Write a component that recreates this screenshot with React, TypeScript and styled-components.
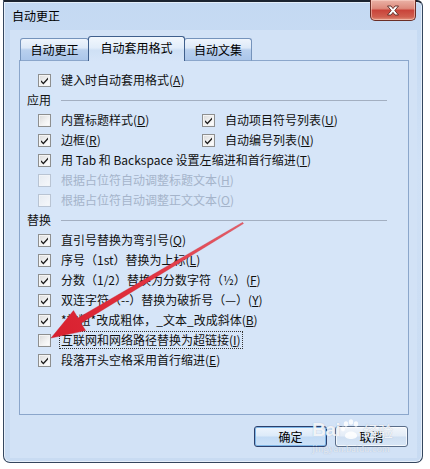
import React from 'react';
import styled, { createGlobalStyle } from 'styled-components';

const GlobalStyle = createGlobalStyle`
  html, body {
    margin: 0;
    padding: 0;
    background: #ffffff;
  }
  body {
    font-family: "Noto Sans CJK SC", "Noto Sans", sans-serif;
    font-size: 12px;
    color: #111;
  }
`;

const Page = styled.div`
  position: relative;
  width: 430px;
  height: 469px;
  overflow: hidden;
  background: #fff;
`;

const Window = styled.div`
  box-sizing: border-box;
  margin-left: 3px;
  width: 420px;
  height: 463px;
  border: 1px solid #34465e;
  border-top: 2px solid #1c2430;
  border-radius: 0 6px 7px 7px;
  background: linear-gradient(180deg, #c4d9f2 0%, #d0e1f6 35%, #c8dbf2 100%);
  box-shadow: inset 0 0 0 1px rgba(255, 255, 255, 0.55);
  display: flex;
  flex-direction: column;
`;

const TitleBar = styled.div`
  height: 28px;
  display: flex;
  justify-content: space-between;
  align-items: flex-start;
`;

const TitleText = styled.div`
  padding: 5px 0 0 8px;
  font-size: 12px;
  line-height: 18px;
  color: #000;
`;

const CloseButton = styled.div`
  box-sizing: border-box;
  width: 46px;
  height: 21px;
  margin: -2px 6px 0 0;
  border: 1px solid #6a2e26;
  border-top: none;
  border-radius: 0 0 5px 5px;
  background: linear-gradient(180deg, #eab2a6 0%, #dd8a7c 42%, #c9443a 52%, #d06050 85%, #e2957f 100%);
  box-shadow: inset 0 0 0 1px rgba(255, 220, 210, 0.5);
  display: flex;
  align-items: center;
  justify-content: center;
`;

const Client = styled.div`
  flex: 1;
  margin: 0 5px 4px 6px;
  border: 1px solid #617d a3;
  border-color: #627ea4;
  background: #d2e2f6;
  padding: 7px 8px 0 9px;
  display: flex;
  flex-direction: column;
`;

const TabStrip = styled.div`
  display: flex;
  align-items: flex-end;
  height: 24px;
  padding-left: 1px;
  margin-bottom: -1px;
`;

const Tab = styled.div<{ $active?: boolean; $width: number }>`
  box-sizing: border-box;
  position: relative;
  z-index: ${p => (p.$active ? 2 : 1)};
  width: ${p => p.$width}px;
  height: ${p => (p.$active ? 25 : 23)}px;
  margin-left: ${p => (p.$active ? -1 : 0)}px;
  margin-right: ${p => (p.$active ? -1 : 0)}px;
  border: 1px solid ${p => (p.$active ? '#3f5f8c' : '#7593bb')};
  border-bottom: ${p => (p.$active ? 'none' : '1px solid #8ba6cb')};
  border-radius: 3px 3px 0 0;
  background: ${p =>
    p.$active
      ? 'linear-gradient(180deg, #f2f7fd 0%, #e2edfa 45%, #cfe0f5 55%, #d6e5f8 100%)'
      : 'linear-gradient(180deg, #eef4fc 0%, #dde9f8 42%, #b9d0ee 52%, #abc6ea 100%)'};
  display: flex;
  justify-content: center;
  align-items: center;
  padding-bottom: ${p => (p.$active ? 3 : 0)}px;
  font-size: 12px;
  color: #000;
`;

const Panel = styled.div`
  box-sizing: border-box;
  height: 355px;
  border: 1px solid #8ba6cb;
  background: #d6e5f8;
  padding: 9px 21px 0 7px;
`;

const Row = styled.div`
  display: flex;
  align-items: center;
  height: 20px;
  padding-left: 11px;
`;

const TwoColRow = styled.div`
  display: grid;
  grid-template-columns: 164px auto;
  align-items: center;
  height: 20px;
  padding-left: 11px;
`;

const SectionHeader = styled.div`
  display: grid;
  grid-template-columns: 34px 1fr;
  align-items: center;
  height: 20px;
  line-height: 20px;
`;

const SectionLine = styled.div`
  height: 1px;
  background: #a3afc1;
  margin-top: 1px;
`;

const Option = styled.div`
  display: flex;
  align-items: center;
`;

const Box = styled.div<{ $disabled?: boolean }>`
  box-sizing: border-box;
  width: 13px;
  height: 13px;
  border: 1px solid ${p => (p.$disabled ? '#b9c4d3' : '#8e8f8f')};
  background: ${p =>
    p.$disabled
      ? 'linear-gradient(135deg, #e6ebf1 0%, #f6f8fb 100%)'
      : 'linear-gradient(135deg, #d9d9d9 0%, #f3f3f3 60%, #ffffff 100%)'};
  box-shadow: inset 0 0 0 1px ${p => (p.$disabled ? '#f1f4f8' : '#f4f4f4')};
  display: flex;
  align-items: center;
  justify-content: center;
  flex: none;
`;

const Label = styled.span<{ $disabled?: boolean; $focus?: boolean }>`
  margin-left: 10px;
  line-height: 16px;
  white-space: nowrap;
  color: ${p => (p.$disabled ? '#a5b4ca' : '#111')};
  outline: ${p => (p.$focus ? '1px dotted #333' : 'none')};
  outline-offset: 0;
  padding: 0 ${p => (p.$focus ? 1 : 0)}px;
  margin-right: ${p => (p.$focus ? -2 : 0)}px;
  position: relative;
  left: ${p => (p.$focus ? -1 : 0)}px;
`;

const Key = styled.span`
  text-decoration: underline;
  text-underline-offset: 1px;
`;

const Footer = styled.div`
  display: flex;
  justify-content: flex-end;
  gap: 8px;
  padding: 11px 1px 0 0;
`;

const Button = styled.div<{ $default?: boolean }>`
  box-sizing: border-box;
  width: 73px;
  height: 21px;
  border: 1px solid ${p => (p.$default ? '#2b3f6c' : '#5a6d89')};
  border-radius: 3px;
  background: ${p =>
    p.$default
      ? 'linear-gradient(180deg, #eef5fd 0%, #dceaf9 48%, #c3dbf5 52%, #cde2f8 100%)'
      : 'linear-gradient(180deg, #f2f6fb 0%, #e3ecf7 48%, #cfdff2 52%, #d8e6f6 100%)'};
  box-shadow: inset 0 0 0 1px ${p => (p.$default ? '#7fb6e6' : 'rgba(255,255,255,0.7)')};
  display: flex;
  align-items: center;
  justify-content: center;
  font-size: 12px;
  color: #000;
`;

const Watermark = styled.div`
  position: absolute;
  left: 312px;
  top: 417px;
  width: 92px;
  color: rgba(255, 255, 255, 0.85);
  text-shadow: 0 0 1px rgba(120, 140, 170, 0.6);
  pointer-events: none;
`;

const MarkLine = styled.div`
  display: flex;
  align-items: flex-end;
  height: 24px;
`;

const MarkBai = styled.span`
  font-family: "Liberation Sans", Arial, sans-serif;
  font-weight: bold;
  font-size: 19px;
  line-height: 22px;
  letter-spacing: -0.5px;
`;

const MarkJy = styled.span`
  font-size: 15px;
  line-height: 20px;
  margin-left: 1px;
`;

const MarkUrl = styled.div`
  font-family: "Liberation Serif", serif;
  font-size: 10px;
  line-height: 12px;
  margin-top: 2px;
  letter-spacing: 0.2px;
  color: rgba(255, 255, 255, 0.7);
`;

const Overlay = styled.svg`
  position: absolute;
  left: 0;
  top: 0;
  pointer-events: none;
  z-index: 10;
`;

const Check = () => (
  <svg width="9" height="9" viewBox="0 0 9 9">
    <path d="M1 4.2 L3.4 6.6 L8 1.6 L8 3.4 L3.4 8.4 L1 6 Z" fill="#1b1b1b" />
  </svg>
);

type Item = {
  text: React.ReactNode;
  checked: boolean;
  disabled?: boolean;
  focus?: boolean;
};

const Opt: React.FC<Item> = ({ text, checked, disabled, focus }) => (
  <Option>
    <Box $disabled={disabled}>{checked && <Check />}</Box>
    <Label $disabled={disabled} $focus={focus}>
      {text}
    </Label>
  </Option>
);

const k = (label: string, key: string) => (
  <>
    {label}(<Key>{key}</Key>)
  </>
);

const replaceItems: Item[] = [
  { text: k('直引号替换为弯引号', 'Q'), checked: true },
  { text: k('序号（1st）替换为上标', 'L'), checked: true },
  { text: k('分数（1/2）替换为分数字符（½）', 'F'), checked: true },
  { text: k('双连字符（--）替换为破折号（—）', 'Y'), checked: true },
  { text: k('*加粗*改成粗体，_文本_改成斜体', 'B'), checked: true },
  { text: k('互联网和网络路径替换为超链接', 'I'), checked: false, focus: true },
  { text: k('段落开头空格采用首行缩进', 'E'), checked: true },
];

export default function App() {
  return (
    <Page>
      <GlobalStyle />
      <Window>
        <TitleBar>
          <TitleText>自动更正</TitleText>
          <CloseButton>
            <svg width="14" height="11" viewBox="0 0 14 11">
              <path
                d="M1.5 1 H5 L7 3.6 L9 1 H12.5 L8.8 5.5 L12.5 10 H9 L7 7.4 L5 10 H1.5 L5.2 5.5 Z"
                fill="#ffffff"
                stroke="#5a2620"
                strokeWidth="0.9"
                strokeLinejoin="round"
              />
            </svg>
          </CloseButton>
        </TitleBar>
        <Client>
          <TabStrip>
            <Tab $width={69}>自动更正</Tab>
            <Tab $width={97} $active>
              自动套用格式
            </Tab>
            <Tab $width={68}>自动文集</Tab>
          </TabStrip>
          <Panel>
            <Row>
              <Opt text={k('键入时自动套用格式', 'A')} checked />
            </Row>
            <SectionHeader>
              <span>应用</span>
              <SectionLine />
            </SectionHeader>
            <TwoColRow>
              <Opt text={k('内置标题样式', 'D')} checked={false} />
              <Opt text={k('自动项目符号列表', 'U')} checked />
            </TwoColRow>
            <TwoColRow>
              <Opt text={k('边框', 'R')} checked />
              <Opt text={k('自动编号列表', 'N')} checked />
            </TwoColRow>
            <Row>
              <Opt text={k('用 Tab 和 Backspace 设置左缩进和首行缩进', 'T')} checked />
            </Row>
            <Row>
              <Opt text={k('根据占位符自动调整标题文本', 'H')} checked={false} disabled />
            </Row>
            <Row>
              <Opt text={k('根据占位符自动调整正文文本', 'O')} checked={false} disabled />
            </Row>
            <SectionHeader>
              <span>替换</span>
              <SectionLine />
            </SectionHeader>
            {replaceItems.map((it, i) => (
              <Row key={i}>
                <Opt {...it} />
              </Row>
            ))}
          </Panel>
          <Footer>
            <Button $default>确定</Button>
            <Button>取消</Button>
          </Footer>
        </Client>
      </Window>

      <Watermark>
        <MarkLine>
          <MarkBai>Bai</MarkBai>
          <svg width="22" height="22" viewBox="0 0 22 22">
            <g fill="rgba(255,255,255,0.85)">
              <ellipse cx="6" cy="5" rx="2.2" ry="2.8" />
              <ellipse cx="11" cy="3" rx="2.2" ry="2.8" />
              <ellipse cx="16" cy="5" rx="2.2" ry="2.8" />
              <ellipse cx="3" cy="10" rx="2" ry="2.4" />
              <path d="M5 17 C5 11 17 11 17 17 C17 21 5 21 5 17 Z" />
            </g>
          </svg>
          <MarkJy>经验</MarkJy>
        </MarkLine>
        <MarkUrl>jingyan.baidu.com</MarkUrl>
      </Watermark>

      <Overlay width="430" height="469" viewBox="0 0 430 469">
        <defs>
          <linearGradient id="arrowRed" x1="243" y1="223" x2="52" y2="337" gradientUnits="userSpaceOnUse">
            <stop offset="0" stopColor="#e8606a" />
            <stop offset="0.5" stopColor="#e2323f" />
            <stop offset="1" stopColor="#d8202f" />
          </linearGradient>
        </defs>
        <polygon
          points="242.6,222.4 78,318 73.5,310.6 51,338 85.6,330.6 81,323.2 243.4,223.6"
          fill="url(#arrowRed)"
          stroke="#c81e2c"
          strokeWidth="0.4"
          strokeLinejoin="round"
        />
      </Overlay>
    </Page>
  );
}
